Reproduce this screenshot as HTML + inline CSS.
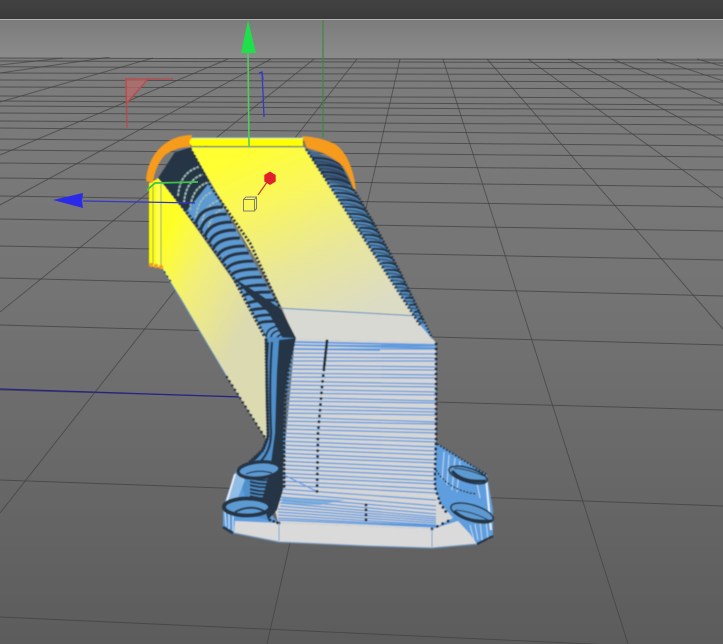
<!DOCTYPE html>
<html>
<head>
<meta charset="utf-8">
<style>
html,body{margin:0;padding:0;width:723px;height:644px;overflow:hidden;background:#666}
svg{display:block}
</style>
</head>
<body>
<svg width="723" height="644" viewBox="0 0 723 644" xmlns="http://www.w3.org/2000/svg">
<defs>
<linearGradient id="sky" x1="0" y1="0" x2="0" y2="1"><stop offset="0" stop-color="#7c7c7c"/><stop offset="1" stop-color="#8b8b8b"/></linearGradient>
<linearGradient id="ground" x1="0" y1="0" x2="0" y2="1"><stop offset="0" stop-color="#7d7d7d"/><stop offset=".4" stop-color="#747474"/><stop offset="1" stop-color="#5c5c5c"/></linearGradient>
<linearGradient id="bar" x1="0" y1="0" x2="0" y2="1"><stop offset="0" stop-color="#424242"/><stop offset="1" stop-color="#3a3a3a"/></linearGradient>
<linearGradient id="topf" gradientUnits="userSpaceOnUse" x1="250" y1="147" x2="330" y2="325"><stop offset="0" stop-color="#ffff30"/><stop offset=".3" stop-color="#f9f65e"/><stop offset=".65" stop-color="#e8e69a"/><stop offset="1" stop-color="#dcdcc4"/></linearGradient>
<linearGradient id="leftf" gradientUnits="userSpaceOnUse" x1="160" y1="250" x2="258" y2="300"><stop offset="0" stop-color="#ffff28"/><stop offset=".4" stop-color="#f2ef78"/><stop offset="1" stop-color="#dcdab0"/></linearGradient>
<filter id="soft" x="-5%" y="-5%" width="110%" height="110%"><feGaussianBlur stdDeviation=".4"/></filter>
<filter id="softg" x="0" y="0" width="100%" height="100%"><feGaussianBlur stdDeviation=".3"/></filter>
<clipPath id="cl"><path d="M158 178L175 152L190 147L296 338L265 337L233 277L200 230Z"/></clipPath>
<clipPath id="cr"><path d="M305 148L340 163L354 190L373 222L400 272L434 341L420 325Z"/></clipPath>
<path id="rr" fill="none" stroke="#253444" stroke-width="2.300" d="M312 158Q336 157 348 171M317 165Q340 164 351 177M321 172Q343 171 354 184M326 179Q347 178 357 190M331 186Q352 185 361 197M335 193Q355 192 364 203M340 200Q360 199 368 210M345 207Q364 206 371 216M349 214Q367 213 374 223M354 221Q372 220 378 229M359 228Q376 227 381 236M363 235Q380 234 385 242M368 242Q384 241 388 249M372 249Q388 248 391 255M377 256Q392 255 395 262M382 263Q396 262 398 268M386 270Q400 269 402 275M391 277Q404 276 405 281M395 284Q408 283 408 288M400 291Q411 290 411 294M405 298Q415 297 415 301M409 305Q419 304 418 307M414 312Q422 311 421 314M418 319Q425 318 424 320"/>
</defs>

<rect x="0" y="0" width="723" height="19" fill="url(#bar)"/>
<rect x="0" y="19" width="723" height="1" fill="#b4b4b4"/>
<rect x="0" y="20" width="723" height="38" fill="url(#sky)"/>
<rect x="0" y="58" width="723" height="586" fill="url(#ground)"/>

<!-- grid -->
<g fill="none" filter="url(#softg)">
<path stroke="#3e3e3e" stroke-width="1" opacity=".65" d="M697 59L2763 644M657 59L2427 644M612 59L2049 644M568 59L1679 644M528 59L1343 644M487 59L998 644M443 59L628 644M400 59L267 644M357 59L0 513M314 59L0 312M271 59L0 205M228 59L0 155M153 58L0 102M110 57L0 73M63 58L0 65"/>
<path stroke="#404040" stroke-width="1" opacity=".75" d="M0 58L723 60M0 61L723 63M0 66.800L723 69M0 73L723 75M0 80L723 82M0 87L723 89M0 96L723 98M0 101L723 105M0 106L723 110M0 113L723 117M0 121L723 125M0 128L723 135M0 139L723 146M0 150L723 157M0 163L723 170M0 178L723 187M0 196L723 207M0 219L723 231M0 246L723 260M0 278L723 296M0 325L723 345M0 390L723 410M0 480L723 506M0 617L723 650"/>
</g>

<path d="M0 389L240 397" stroke="#23238a" stroke-width="1.200" fill="none"/>

<path d="M125 79H148L126 104Z" fill="#b86a6a" opacity=".75"/>
<path d="M125 79H173M126 79L127 128M148 79L126 104" stroke="#b84a4a" stroke-width="1.300" fill="none"/>
<path d="M259 73L262 72L263 93L264 117M262 72L263 80" stroke="#3838c8" stroke-width="1.300" fill="none"/>
<path d="M323 20V137" stroke="#3b8a3b" stroke-width="1.200"/>

<g filter="url(#soft)">
<!-- left face -->
<path d="M150 183V266L162 268L182 300L227 377L268 442V340L240 290L160 177Z" fill="url(#leftf)"/>
<path d="M162 268L227 377" stroke="#5b8fc0" stroke-width="1" fill="none"/>
<path d="M227 377L268 442" stroke="#22303f" stroke-width="2.600" stroke-dasharray="0 5" stroke-linecap="round" fill="none"/>
<path d="M162 268L172 283" stroke="#22303f" stroke-width="2" stroke-dasharray="0 5" stroke-linecap="round" fill="none"/>
<rect x="149" y="183" width="7" height="83" fill="#ffff00"/>
<rect x="156" y="183" width="5" height="84" fill="#ffff50"/>
<path d="M153 185V265M161 183V267" stroke="#7fa060" stroke-width="1" fill="none"/>

<!-- top face -->
<path d="M190 147H304L420 325L436 343L295 339L282 308L262 270Z" fill="url(#topf)"/>
<path d="M282 308L417 316L436 343L295 339Z" fill="#d9d9d3"/>
<path d="M278 308L418 316" stroke="#5a90c0" stroke-width="1" fill="none"/>

<!-- left channel -->
<path d="M158 178L175 152L190 147L296 338L265 337L233 277L200 230Z" fill="#5d9ad2"/>
<g clip-path="url(#cl)">
<path d="M156 178L172 153L191 147L210 182L186 212L162 182Z" fill="#253444"/>
<g fill="none" stroke="#9cbcb6" stroke-width="1.800" stroke-dasharray="3 1">
<path d="M178 196Q180 170 203 166M184 203Q186 177 208 173M190 210Q192 184 214 181M196 218Q198 193 220 190M202 225Q204 201 226 199M208 232Q210 209 231 207"/>
</g>
<path fill="none" stroke="#253444" stroke-width="3.200" d="M195 228Q197 207 223 207M200 234Q202 214 227 214M204 241Q206 222 232 222M208 247Q210 230 236 230M212 253Q214 238 240 238M216 260Q218 246 245 246M221 266Q223 253 249 253M225 273Q227 261 254 261M229 279Q231 269 258 269M233 285Q235 277 262 277M237 292Q239 285 267 285M241 298Q243 292 271 292M246 305Q248 300 276 300M250 311Q252 308 280 308M254 318Q257 314 284 315M258 324Q262 320 288 322"/>
<path fill="none" stroke="#253444" stroke-width="1.800" d="M266 338Q266 328 278 326M271 340Q270 331 282 330M276 342Q276 334 286 334"/>
</g>
<path d="M160 177L200 230L233 277L265 337" stroke="#253444" stroke-width="3.500" stroke-dasharray="2.500 1.500" fill="none"/>
<path d="M190 148L213 190L250 243L280 308" stroke="#253444" stroke-width="3" stroke-dasharray="2.500 1.500" fill="none"/>
<!-- dark spine -->
<path d="M234 278L262 296L281 309L296 338L287 348L281 335L268 312L246 292Z" fill="#253444"/>

<!-- right channel -->
<path d="M305 148L340 163L354 190L373 222L400 272L434 341L420 325Z" fill="#5d9ad2"/>
<g clip-path="url(#cr)">
<use href="#rr"/>
<use href="#rr" y="3.500" opacity=".55"/>
<path d="M306 149L335 150L352 186L326 180Z" fill="#253444" opacity=".45"/>
</g>
<path d="M306 149L420 325" stroke="#253444" stroke-width="3" stroke-dasharray="2 2" fill="none"/>
<path d="M352 186L373 222L400 272L432 338" stroke="#253444" stroke-width="2.400" stroke-dasharray="2 1.500" fill="none"/>

<!-- orange corners -->
<path d="M192 135Q172 135 158 150Q147 163 146 181L153 183Q155 166 165 155Q176 147 190 147Z" fill="#f79b1e"/>
<path d="M302 136Q320 137 335 144Q352 156 356 190L353 188Q347 168 338 162Q325 152 307 148Z" fill="#f79b1e"/>
<path d="M192 138H303V146H192Q187 142 192 138Z" fill="#ffff00"/>
<path d="M192 138H303" stroke="#a8d8c8" stroke-width="1"/>
<path d="M190 147H304" stroke="#7c9a6a" stroke-width="1"/>
<circle cx="151" cy="265" r="2.200" fill="#f79b1e"/><circle cx="156" cy="266" r="2.200" fill="#f79b1e"/><circle cx="161" cy="267" r="2.200" fill="#f79b1e"/>

<!-- base plate -->
<path d="M237 468L223 507V527L233 533L279 542L367 546L432 548L477 544L493 535V510L487 475L436 443L435 487L278 523Z" fill="#5e9ede"/>
<path d="M295 339L436 343L436 440L435 487L440 503L453 518L432 529L278 523L275 510L281 490Z" fill="#d6d6d6"/>
<path d="M235 521L278 523L432 529L458 521L470 534L477 544L432 548L367 546L279 542L234 533Z" fill="#dadada"/>
<path d="M234 533L279 542L367 546L432 548L477 544" stroke="#6e97be" stroke-width="1.300" fill="none"/>
<g fill="none" stroke="#5a99e0" stroke-width="1.200">
<path d="M280 345L436 346M280 349L436 349M280 353L436 354M280 357L436 358M280 361L436 361M280 365L436 367M280 369L436 370M280 373L436 375M280 377L436 378M280 381L436 384M280 385L436 387M280 389L436 392M280 393L436 395M280 397L436 401M280 401L436 403M280 405L436 409M280 409L436 412M280 413L436 415M280 417L436 422M280 421L436 424M280 425L436 430M280 429L436 433M280 433L436 439M280 437L436 442M280 441L436 447M280 445L436 451M280 449L436 455M280 453L436 460M280 457L436 463M280 461L436 468M280 465L436 472M280 469L436 476M280 473L436 481M280 477L436 484M280 481L436 489M280 485L436 493M280 489L436 500M280 493L436 506M280 497L436 510M280 500L436 514M280 503L436 517M280 506L436 519M278 509L436 521M278 512L436 523M278 515L436 525M278 518L436 526M278 520L436 527M280 473L318 492"/>
</g>
<path d="M282 497L345 500L320 505L282 504Z" fill="#6aa3dc" opacity=".7"/>
<path d="M295 342L436 345M295 345L436 348M295 349L380 350" stroke="#5a99e0" stroke-width="1.800" fill="none"/>

<!-- left lower channel -->
<path d="M265 337L296 338L285 393L281 433L281 490L275 510L268 520L250 515L240 480L250 462L263 450L268 437Z" fill="#4f8fca"/>
<path d="M279 340L296 338L288 370L284 400L283 433L283 490L277 510L268 520L262 500L270 470L275 433L276 400L277 370Z" fill="#253444"/>
<g fill="none" stroke="#253444" stroke-width="2.200">
<path d="M272 342Q269 380 271 430Q272 450 260 462M268 342Q265 380 268 430Q268 448 254 460"/>
</g>
<path d="M266 340L267 390L268 437L263 450L250 462" stroke="#253444" stroke-width="3.400" stroke-dasharray="0 3.200" stroke-linecap="round" fill="none"/>
<path d="M293 345L288 370L285 400L284 433L284 490" stroke="#253444" stroke-width="3.500" stroke-dasharray="0 4.300" stroke-linecap="round" fill="none"/>

<!-- left flange hatch -->
<path d="M237 470L226 505L233 510L245 480Z" fill="#8fbde6"/>
<path d="M235 474L226 504" stroke="#e4eef6" stroke-width="2"/>
<g fill="none" stroke="#253444" stroke-width="2">
<path d="M250 478Q266 483 282 477M250 481.500Q266 486.500 282 481M250 485Q266 490 282 484M250 489Q266 494 282 488M250 492.500Q266 497.500 281 492M250 496Q266 501 280 495M252 500Q266 504 278 499"/>
</g>
<path d="M225 512L226 526M229 514V529M233 514V531" stroke="#cfe0ee" stroke-width="1"/>
<path d="M223 527L233 533" stroke="#253444" stroke-width="2.500" fill="none"/>

<!-- left bolts -->
<ellipse cx="259" cy="470" rx="21" ry="8" transform="rotate(-5 259 470)" fill="#5d9ad2" stroke="#253444" stroke-width="3.500"/>
<path d="M246 474Q258 469 272 473" stroke="#253444" stroke-width="1.200" fill="none"/>
<ellipse cx="247" cy="507" rx="23" ry="8.500" fill="#5d9ad2" stroke="#253444" stroke-width="4"/>
<path d="M235 512Q250 504 264 511" stroke="#253444" stroke-width="2" fill="none"/>

<!-- right flange details -->
<g stroke="#dfeaf4" stroke-width="1" fill="none" opacity=".75">
<path d="M444 452L442 480M449 455L447 485M455 458L452 490M460 461L457 492M476 478L480 498M480 522L482 540M470 525L474 540M475 524L478 540M486 520L488 540"/>
</g>
<path d="M486 478L491 530" stroke="#e4eef6" stroke-width="2" fill="none"/>
<path d="M436 470Q448 490 476 494" stroke="#253444" stroke-width="1.500" stroke-dasharray="2 1.500" fill="none"/>
<path d="M437 444L487 475" stroke="#253444" stroke-width="1.800" stroke-dasharray="2 1.500" fill="none"/>
<path d="M477 544L493 536" stroke="#253444" stroke-width="2.200" fill="none"/>
<ellipse cx="468" cy="475" rx="20" ry="7" transform="rotate(17 468 475)" fill="#5d9ad2" stroke="#253444" stroke-width="1.600"/>
<path d="M452 471Q462 483 486 481" stroke="#253444" stroke-width="3.200" fill="none"/>
<path d="M454 468Q468 469 484 476" stroke="#253444" stroke-width="1" fill="none"/>
<ellipse cx="472" cy="513" rx="22" ry="8" transform="rotate(17 472 513)" fill="#5d9ad2" stroke="#253444" stroke-width="1.600"/>
<path d="M454 511Q466 523 492 521" stroke="#253444" stroke-width="3.200" fill="none"/>
<path d="M456 510Q474 512 488 520" stroke="#253444" stroke-width="1" fill="none"/>

<!-- dots -->
<g fill="none" stroke="#222f3e" stroke-linecap="round">
<path d="M327 341L322 387L318 433L317 493" stroke-width="3" stroke-dasharray="0 5.800"/>
<path d="M327 341L324 368" stroke-width="2.600"/>
<path d="M436 344V440L435 470L435 487L440 503L446 512" stroke-width="3" stroke-dasharray="0 5"/>
<path d="M366 505V523" stroke-width="3" stroke-dasharray="0 5"/>
<path d="M432 529L442 524L452 519" stroke-width="3" stroke-dasharray="0 6"/>
<path d="M270 520L278 523" stroke-width="3" stroke-dasharray="0 4"/>
<path d="M279 523V542M432 529V548" stroke-width="3" stroke-dasharray="0 19"/>
</g>
<path d="M279 523V541M432 529V547" stroke="#7ea6cc" stroke-width="1" fill="none"/>
</g>

<!-- gizmos on top -->
<path d="M248 53L249 147" stroke="#4fcf55" stroke-width="1.600" fill="none"/>
<path d="M248 20L256 53H241Z" fill="#1fe04a"/>
<path d="M147 190L155 183L198 182" stroke="#3fc24a" stroke-width="1.800" fill="none"/>
<path d="M83 201L195 203" stroke="#3434c8" stroke-width="1.200" fill="none"/>
<path d="M53 200L83 193L82 201L83 208Z" fill="#2a2ae8"/>
<path d="M258 195L270 178" stroke="#b8402e" stroke-width="1.200"/>
<path d="M270 171.500L275.700 175V181.500L270 185L264.300 181.500V175Z" fill="#e2202c"/>
<path d="M243.500 199.500H254.500V211H243.500ZM243.500 199.500L246 197H256.500V208.500L254.500 211M254.500 199.500L256.500 197" stroke="#807f70" stroke-width="1" fill="none"/>
</svg>
</body>
</html>
